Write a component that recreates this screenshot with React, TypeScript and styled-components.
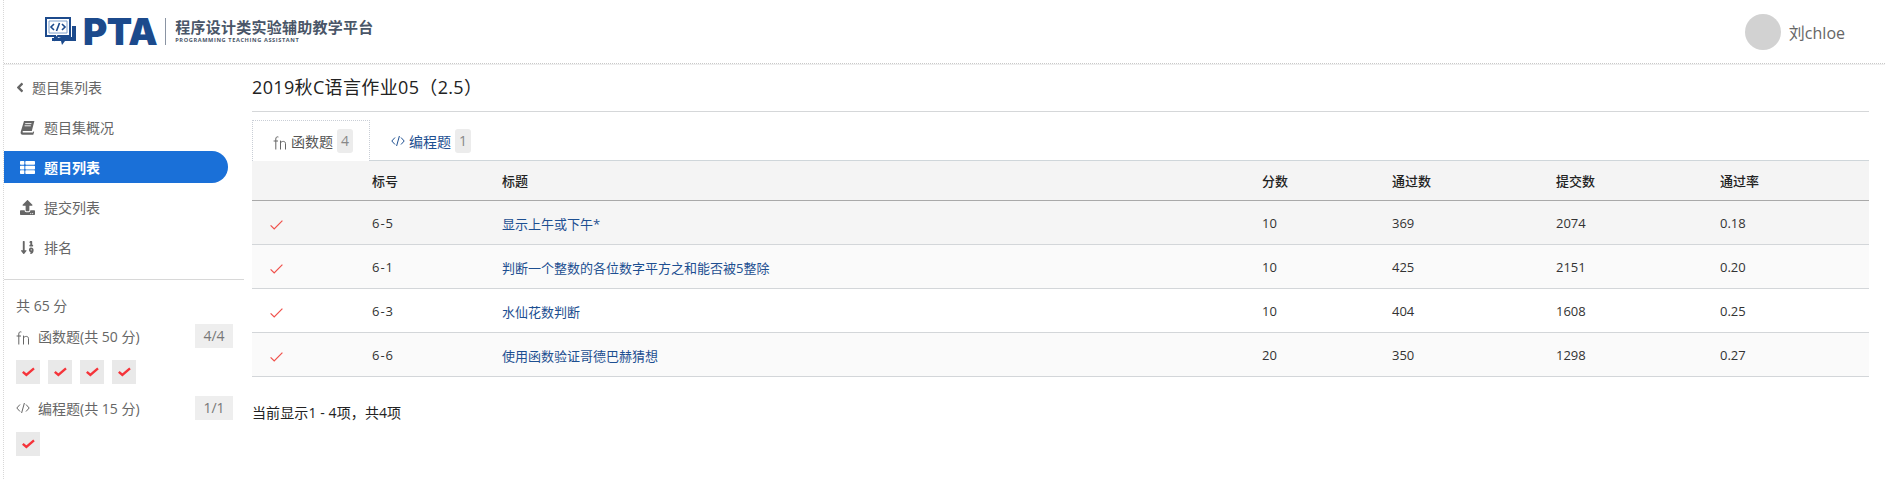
import { FC } from "react"
import styled, { createGlobalStyle } from "styled-components"
import { FaAngleLeft, FaSortNumericDown, FaThList, FaUpload } from "react-icons/fa"

const GlobalStyle = createGlobalStyle`
  html, body {
    margin: 0;
    background: #fff;
    font-family: "Open Sans", "Noto Sans CJK SC", sans-serif;
    color: #333;
  }
`

const Page = styled.div`
  height: 479px;
  margin-left: 3px;
  border-left: 1px dotted #d8d8d8;
  box-sizing: border-box;
  overflow: hidden;
`

const Header = styled.header`
  height: 64px;
  box-sizing: border-box;
  border-bottom: 1px dotted #c9c9c9;
  box-shadow: 0 1px 0 #eee;
  display: flex;
  align-items: center;
  justify-content: space-between;
  padding: 0 40px 0 41px;
`

const Logo = styled.div`
  display: flex;
  align-items: center;
  margin-top: -1px;
`

const LogoWord = styled.span`
  margin-left: 7px;
  font: 900 37px/1 Inter, sans-serif;
  letter-spacing: -0.5px;
  color: #1c4a8c;
`

const LogoRule = styled.span`
  width: 1px;
  height: 27px;
  margin: 0 9px 0 8px;
  background: #8a94a3;
`

const LogoText = styled.div`
  display: flex;
  flex-direction: column;
`

const LogoTitle = styled.span`
  font-size: 15px;
  line-height: 19px;
  letter-spacing: 0.25px;
  font-weight: 700;
  color: #4a5668;
`

const LogoSub = styled.span`
  font: 700 5.6px/7px "Open Sans", sans-serif;
  letter-spacing: 0.62px;
  color: #4a5668;
`

const User = styled.div`
  display: flex;
  align-items: center;
  gap: 8px;
  font-size: 16px;
  color: #666;
`

const Avatar = styled.span`
  width: 36px;
  height: 36px;
  border-radius: 50%;
  background: #d2d2d2;
`

const Body = styled.div`
  display: flex;
`

const Sidebar = styled.aside`
  width: 240px;
  flex: none;
  padding-top: 3px;
`

const Nav = styled.nav`
  display: flex;
  flex-direction: column;
  padding-bottom: 12px;
  border-bottom: 1px solid #d8d8d8;
`

const NavRow = styled.div<{ $active?: boolean; $back?: boolean }>`
  height: 32px;
  width: 224px;
  box-sizing: border-box;
  margin: 4px 0;
  display: flex;
  align-items: center;
  gap: ${(p) => (p.$back ? "8px" : "9px")};
  padding-left: ${(p) => (p.$back ? "12px" : "16px")};
  border-radius: 0 16px 16px 0;
  font-size: 14px;
  font-weight: ${(p) => (p.$active ? 700 : 400)};
  color: ${(p) => (p.$active ? "#fff" : "#666")};
  background: ${(p) => (p.$active ? "#1a70d8" : "transparent")};

  svg {
    flex: none;
    width: ${(p) => (p.$back ? "8px" : "15px")};
    height: 15px;
  }
`

const Summary = styled.div`
  padding: 16px 11px 0 12px;
  font-size: 14px;
  color: #666;
`

const Total = styled.div`
  line-height: 20px;
  margin-bottom: 8px;
`

const ScoreRow = styled.div`
  display: flex;
  align-items: center;
  height: 24px;
  gap: 8px;

  svg {
    flex: none;
  }
`

const ScoreBadge = styled.span`
  margin-left: auto;
  width: 38px;
  height: 24px;
  line-height: 24px;
  text-align: center;
  background: #eeeeee;
  color: #777;
`

const CheckGrid = styled.div`
  display: flex;
  gap: 8px;
  margin: 12px 0;
`

const CheckCell = styled.span`
  width: 24px;
  height: 24px;
  display: flex;
  align-items: center;
  justify-content: center;
  background: #e9e9e9;
`

const Main = styled.main`
  flex: 1;
  min-width: 0;
  margin: 0 16px 0 8px;
`

const Title = styled.h1`
  margin: 0;
  height: 48px;
  line-height: 46px;
  box-sizing: border-box;
  border-bottom: 1px solid #d5d7d9;
  font-size: 18px;
  font-weight: 400;
  letter-spacing: 0.35px;
  color: #222;
`

const TabBar = styled.div`
  display: flex;
  margin-top: 8px;
  height: 41px;
  box-sizing: border-box;
  border-bottom: 1px solid #cfd6da;
`

const Tab = styled.div<{ $active?: boolean }>`
  height: 41px;
  box-sizing: border-box;
  display: flex;
  align-items: center;
  gap: 4px;
  padding: 0 16px 0 20px;
  font-size: 14px;
  color: ${(p) => (p.$active ? "#555" : "#1d4f91")};
  background: ${(p) => (p.$active ? "#fff" : "transparent")};
  border: 1px dotted ${(p) => (p.$active ? "#c9ced6" : "transparent")};
  border-bottom: 0;
`

const TabCount = styled.span`
  width: 16px;
  height: 24px;
  line-height: 24px;
  text-align: center;
  border-radius: 3px;
  background: #ececec;
  color: #888;
`

const Table = styled.table`
  width: 100%;
  table-layout: fixed;
  border-collapse: collapse;
  font-size: 13px;
`

const Th = styled.th`
  height: 39px;
  padding: 0;
  box-sizing: border-box;
  text-align: left;
  font-weight: 500;
  color: #222;
  background: #f4f4f4;
  border-bottom: 1px solid #a9a9a9;
`

const Row = styled.tr<{ $bg: string }>`
  background: ${(p) => p.$bg};
`

const Td = styled.td`
  height: 44px;
  padding: 2px 0 0;
  box-sizing: border-box;
  color: #333;
  border-bottom: 1px solid #d3d6d9;
`

const CheckTd = styled(Td)`
  padding: 5px 0 0 18px;
`

const IdTd = styled(Td)`
  letter-spacing: 1px;
`

const ProblemLink = styled.a`
  color: #1d4f91;
`

const Footer = styled.div`
  margin-top: 26px;
  font-size: 14px;
  line-height: 20px;
  letter-spacing: 0.1px;
  color: #222;
`

const FnSvg = styled.svg`
  position: relative;
  top: 2px;
`

const FnIcon: FC<{ color?: string }> = ({ color = "#666" }) => (
  <FnSvg width="14" height="14" viewBox="0 0 14 14" fill="none" stroke={color} strokeWidth="1">
    <path d="M5.4 1C3.6 .4 2.8 1.4 2.8 3v10.5M.6 5h4.4M7.5 4.6v8.9M7.5 6.8c1-1.8 5-2.2 5 .8v5.9" />
  </FnSvg>
)

const CodeIcon: FC<{ color?: string }> = ({ color = "#666" }) => (
  <svg width="14" height="12" viewBox="0 0 14 12" fill="none" stroke={color} strokeWidth="1">
    <path d="M4 2.5 .8 6 4 9.5M10 2.5 13.2 6 10 9.5M8.4 1 5.6 11" />
  </svg>
)

const BookIcon: FC = () => (
  <svg viewBox="0 0 15 15">
    <path
      d="M4 1h10.4l-2.6 10H3.4c-1 0-1.3 1.6-.2 1.6h9.6l.4-1 1 .2-.9 2.9H2.6C.8 14.7.3 13 .8 11.4z"
      fill="#666"
    />
    <path d="M5.2 3.6h6.2M4.6 5.8h6.2" stroke="#fff" strokeWidth="0.9" />
  </svg>
)

const ThinCheck: FC = () => (
  <svg width="13" height="10" viewBox="0 0 13 10" fill="none" stroke="#f0504a" strokeWidth="1.2">
    <path d="M.6 5.4 4.2 9 12.4 .6" />
  </svg>
)

const BoldCheck: FC = () => (
  <svg width="13" height="10" viewBox="0 0 13 10" fill="none" stroke="#f5343a" strokeWidth="2.4">
    <path d="M.8 4.8 4.4 8 12 1.4" />
  </svg>
)

const LogoMark: FC = () => (
  <svg width="31" height="29" viewBox="0 0 31 29">
    <path d="M1 1h24v18H13l-3 3v-3H1z" fill="#fff" stroke="#1c4a8c" strokeWidth="2" />
    <path d="M4 4h18v12H4z" fill="#fff" stroke="#7fa0cc" strokeWidth="1" />
    <path d="M9 7l-3 3 3 3M17 7l3 3-3 3M14.5 6l-3 8" fill="none" stroke="#1c4a8c" strokeWidth="1.6" />
    <path d="M27 9h4v15H20l-3 4-1-4H7v-3h6l3-1h11z" fill="#1c4a8c" />
  </svg>
)

const columns = [120, 130, 760, 130, 164, 164, 149]

const problems = [
  { id: "6-5", title: "显示上午或下午*", score: 10, passed: 369, submitted: 2074, rate: "0.18", bg: "#f5f5f5" },
  { id: "6-1", title: "判断一个整数的各位数字平方之和能否被5整除", score: 10, passed: 425, submitted: 2151, rate: "0.20", bg: "#fafafa" },
  { id: "6-3", title: "水仙花数判断", score: 10, passed: 404, submitted: 1608, rate: "0.25", bg: "#ffffff" },
  { id: "6-6", title: "使用函数验证哥德巴赫猜想", score: 20, passed: 350, submitted: 1298, rate: "0.27", bg: "#fafafa" },
]

const App: FC = () => (
  <Page>
    <GlobalStyle />
    <Header>
      <Logo>
        <LogoMark />
        <LogoWord>PTA</LogoWord>
        <LogoRule />
        <LogoText>
          <LogoTitle>程序设计类实验辅助教学平台</LogoTitle>
          <LogoSub>PROGRAMMING TEACHING ASSISTANT</LogoSub>
        </LogoText>
      </Logo>
      <User>
        <Avatar />
        刘chloe
      </User>
    </Header>
    <Body>
      <Sidebar>
        <Nav>
          <NavRow $back>
            <FaAngleLeft />
            题目集列表
          </NavRow>
          <NavRow>
            <BookIcon />
            题目集概况
          </NavRow>
          <NavRow $active>
            <FaThList />
            题目列表
          </NavRow>
          <NavRow>
            <FaUpload />
            提交列表
          </NavRow>
          <NavRow>
            <FaSortNumericDown />
            排名
          </NavRow>
        </Nav>
        <Summary>
          <Total>共 65 分</Total>
          <ScoreRow>
            <FnIcon />
            函数题(共 50 分)
            <ScoreBadge>4/4</ScoreBadge>
          </ScoreRow>
          <CheckGrid>
            {[0, 1, 2, 3].map((i) => (
              <CheckCell key={i}>
                <BoldCheck />
              </CheckCell>
            ))}
          </CheckGrid>
          <ScoreRow>
            <CodeIcon />
            编程题(共 15 分)
            <ScoreBadge>1/1</ScoreBadge>
          </ScoreRow>
          <CheckGrid>
            <CheckCell>
              <BoldCheck />
            </CheckCell>
          </CheckGrid>
        </Summary>
      </Sidebar>
      <Main>
        <Title>2019秋C语言作业05（2.5）</Title>
        <TabBar>
          <Tab $active>
            <FnIcon />
            函数题
            <TabCount>4</TabCount>
          </Tab>
          <Tab>
            <CodeIcon color="#1d4f91" />
            编程题
            <TabCount>1</TabCount>
          </Tab>
        </TabBar>
        <Table>
          <colgroup>
            {columns.map((w, i) => (
              <col key={i} width={w} />
            ))}
          </colgroup>
          <thead>
            <tr>
              <Th />
              <Th>标号</Th>
              <Th>标题</Th>
              <Th>分数</Th>
              <Th>通过数</Th>
              <Th>提交数</Th>
              <Th>通过率</Th>
            </tr>
          </thead>
          <tbody>
            {problems.map((p) => (
              <Row key={p.id} $bg={p.bg}>
                <CheckTd>
                  <ThinCheck />
                </CheckTd>
                <IdTd>{p.id}</IdTd>
                <Td>
                  <ProblemLink>{p.title}</ProblemLink>
                </Td>
                <Td>{p.score}</Td>
                <Td>{p.passed}</Td>
                <Td>{p.submitted}</Td>
                <Td>{p.rate}</Td>
              </Row>
            ))}
          </tbody>
        </Table>
        <Footer>当前显示1 - 4项，共4项</Footer>
      </Main>
    </Body>
  </Page>
)

export default App
